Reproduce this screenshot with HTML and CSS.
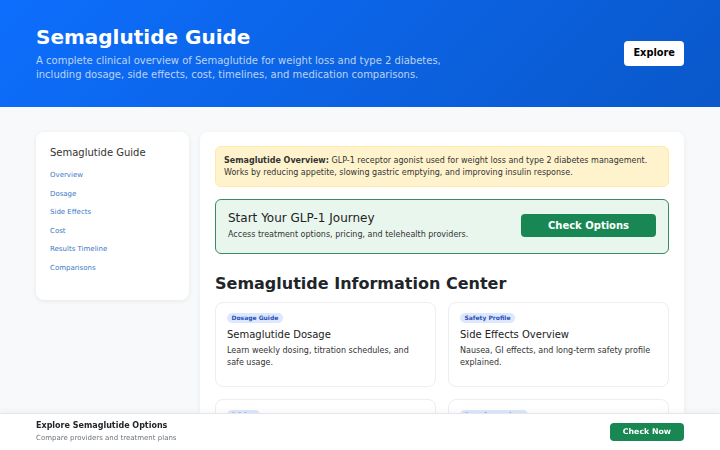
FILE: index.html
```html
<!DOCTYPE html>
<html lang="en">
<head>
  <meta charset="UTF-8">
  <title>Semaglutide Guide</title>
  <link rel="stylesheet" href="styles.css">
</head>
<body>

  <!-- Hero -->
  <header class="hero">
    <div class="hero-text">
      <h1>Semaglutide Guide</h1>
      <p>A complete clinical overview of Semaglutide for weight loss and type 2 diabetes, including dosage, side effects, cost, timelines, and medication comparisons.</p>
    </div>
    <a class="btn-light" href="#">Explore</a>
  </header>

  <div class="layout">
    <!-- Sidebar -->
    <aside class="sidebar">
      <h2>Semaglutide Guide</h2>
      <nav>
        <a href="#">Overview</a>
        <a href="#">Dosage</a>
        <a href="#">Side Effects</a>
        <a href="#">Cost</a>
        <a href="#">Results Timeline</a>
        <a href="#">Comparisons</a>
      </nav>
    </aside>

    <!-- Main content -->
    <main class="content">
      <div class="alert">
        <strong>Semaglutide Overview:</strong> GLP-1 receptor agonist used for weight loss and type 2 diabetes management. Works by reducing appetite, slowing gastric emptying, and improving insulin response.
      </div>

      <div class="cta">
        <div>
          <h3>Start Your GLP-1 Journey</h3>
          <p>Access treatment options, pricing, and telehealth providers.</p>
        </div>
        <a class="btn-green btn-lg" href="#">Check Options</a>
      </div>

      <h2 class="section-title">Semaglutide Information Center</h2>

      <div class="cards">
        <div class="card">
          <span class="badge">Dosage Guide</span>
          <h4>Semaglutide Dosage</h4>
          <p>Learn weekly dosing, titration schedules, and safe usage.</p>
        </div>
        <div class="card">
          <span class="badge">Safety Profile</span>
          <h4>Side Effects Overview</h4>
          <p>Nausea, GI effects, and long-term safety profile explained.</p>
        </div>
        <div class="card">
          <span class="badge">Pricing</span>
          <h4>Semaglutide Cost</h4>
          <p>Compare prices, insurance coverage, and savings programs.</p>
        </div>
        <div class="card">
          <span class="badge">Drug Comparison</span>
          <h4>Semaglutide vs Tirzepatide</h4>
          <p>How the leading GLP-1 medications compare.</p>
        </div>
      </div>
    </main>
  </div>

  <!-- Sticky footer bar -->
  <footer class="bottom-bar">
    <div>
      <strong>Explore Semaglutide Options</strong>
      <span>Compare providers and treatment plans</span>
    </div>
    <a class="btn-green" href="#">Check Now</a>
  </footer>

</body>
</html>
```

FILE: styles.css
```css
body {
  margin: 0;
  background-color: #f8f9fa;
  color: #212529;
  font-family: 'DejaVu Sans', Verdana, sans-serif;
  font-size: 8px;
  line-height: 1.5;
}

a {
  text-decoration: none;
}

.hero {
  height: 107px;
  box-sizing: border-box;
  padding: 0 36px;
  display: flex;
  align-items: center;
  justify-content: space-between;
  background: linear-gradient(135deg, #0d6efd, #0a58ca);
  color: #fff;
}

.hero h1 {
  margin: 0 0 5px;
  font-size: 20px;
  line-height: 1.2;
}

.hero p {
  margin: 0;
  width: 440px;
  font-size: 10px;
  line-height: 14px;
  color: rgba(255, 255, 255, 0.72);
}

.btn-light {
  background-color: #fff;
  color: #000;
  font-weight: bold;
  font-size: 9.8px;
  padding: 5px 9px;
  border-radius: 4px;
}

.layout {
  display: flex;
  align-items: flex-start;
  gap: 11px;
  padding: 25px 36px 60px;
}

.sidebar {
  width: 153px;
  box-sizing: border-box;
  padding: 12px 14px 26px;
  background-color: #fff;
  border-radius: 8px;
  box-shadow: 0 1px 5px rgba(0, 0, 0, 0.08);
}

.sidebar h2 {
  margin: 0 0 9px;
  font-size: 10px;
  font-weight: normal;
  line-height: 17px;
  color: #333;
}

.sidebar nav {
  display: flex;
  flex-direction: column;
  gap: 7px;
}

.sidebar a {
  font-size: 7px;
  line-height: 11.5px;
  color: #3c78c8;
}

.content {
  flex: 1;
  padding: 14px 15px;
  background-color: #fff;
  border-radius: 8px;
  box-shadow: 0 1px 5px rgba(0, 0, 0, 0.06);
}

.alert {
  padding: 8px 8px 7px;
  background-color: #fff3cd;
  border: 1px solid #ffe8a8;
  border-radius: 6px;
  color: #333;
  line-height: 12px;
}

.cta {
  margin-top: 12px;
  padding: 11px 12px 12px;
  display: flex;
  align-items: center;
  justify-content: space-between;
  background-color: #e9f6ee;
  border: 1.5px solid #3a8a62;
  border-radius: 6px;
}

.cta h3 {
  margin: 0 0 2px;
  font-size: 12px;
  font-weight: normal;
  line-height: 1.3;
  color: #222;
}

.cta p {
  margin: 0;
  color: #333;
}

.btn-green {
  background-color: #198754;
  color: #fff;
  font-weight: bold;
  font-size: 7.8px;
  padding: 3px 13px;
  border-radius: 4px;
}

.btn-lg {
  width: 135px;
  box-sizing: border-box;
  text-align: center;
  font-size: 10px;
  padding: 4px 0;
}

.section-title {
  margin: 20px 0 9px;
  font-size: 16px;
  line-height: 1.2;
  color: #212529;
}

.cards {
  display: grid;
  grid-template-columns: 1fr 1fr;
  gap: 12px;
}

.card {
  height: 85px;
  box-sizing: border-box;
  padding: 10px 11px;
  border: 1px solid #eceef1;
  border-radius: 8px;
}

.badge {
  display: inline-block;
  padding: 0 4.5px;
  background-color: #dde8fd;
  color: #2750b8;
  font-size: 6px;
  font-weight: bold;
  line-height: 10px;
  border-radius: 6px;
  vertical-align: top;
}

.card h4 {
  margin: 3px 0 4px;
  font-size: 10px;
  font-weight: normal;
  line-height: 13px;
  color: #222;
}

.card p {
  margin: 0;
  color: #333;
  line-height: 12px;
}

.bottom-bar {
  position: fixed;
  left: 0;
  right: 0;
  bottom: 0;
  height: 37px;
  box-sizing: border-box;
  padding: 0 36px;
  display: flex;
  align-items: center;
  justify-content: space-between;
  background-color: #fff;
  border-top: 1px solid #e3e6ea;
  box-shadow: 0 -2px 6px rgba(0, 0, 0, 0.04);
}

.bottom-bar strong {
  display: block;
  font-size: 8px;
  line-height: 12px;
}

.bottom-bar span {
  display: block;
  font-size: 7px;
  line-height: 12px;
  color: #6c757d;
}
```
